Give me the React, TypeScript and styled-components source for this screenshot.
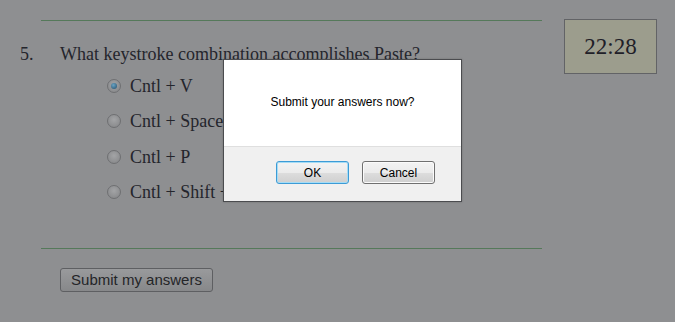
import styled, { createGlobalStyle } from 'styled-components';

const GlobalStyle = createGlobalStyle`
  html, body {
    margin: 0;
    padding: 0;
    background: #8e8f91;
  }
  body {
    width: 675px;
    height: 322px;
    overflow: hidden;
    position: relative;
  }
`;

const Page = styled.div`
  display: flex;
  align-items: flex-start;
  padding-top: 19px;
`;

const Quiz = styled.div`
  width: 542px;
`;

const Rule = styled.hr`
  margin: 0 0 0 41px;
  border: none;
  border-top: 1px solid #55795a;
  height: 0;
  width: 501px;
`;

const TopRule = styled(Rule)`
  margin-top: 1px;
`;

const Question = styled.div`
  display: flex;
  padding: 22px 0 0 20px;
  font-family: 'Liberation Serif', 'Times New Roman', serif;
  font-size: 18px;
  line-height: 22px;
  color: #24252c;
`;

const Num = styled.span`
  width: 40px;
`;

const Options = styled.ul`
  list-style: none;
  margin: 0;
  padding: 10px 0 0 107px;
  display: flex;
  flex-direction: column;
  gap: 13.3px;
  font-family: 'Liberation Serif', 'Times New Roman', serif;
  font-size: 18px;
  line-height: 22px;
  color: #24252c;
`;

const Option = styled.li`
  display: flex;
  align-items: center;
  gap: 9px;
`;

const Radio = styled.span<{ $checked?: boolean }>`
  width: 12px;
  height: 12px;
  border-radius: 50%;
  border: 1px solid #6e6f72;
  background: radial-gradient(circle at 50% 40%, #a3a4a6, #838486);
  display: flex;
  align-items: center;
  justify-content: center;

  &::after {
    content: '';
    display: ${(p) => (p.$checked ? 'block' : 'none')};
    width: 6px;
    height: 6px;
    border-radius: 50%;
    background: radial-gradient(circle at 40% 35%, #6aa4c4, #244d6a);
  }
`;

const Footer = styled.div`
  padding-top: 45px;
`;

const SubmitRow = styled.div`
  padding: 19px 0 0 60px;
`;

const SubmitButton = styled.button`
  width: 153px;
  height: 24px;
  padding: 0;
  font-family: 'Liberation Sans', Arial, sans-serif;
  font-size: 15px;
  color: #242528;
  border: 1px solid #5e5f62;
  border-radius: 3px;
  background: linear-gradient(#999a9c, #87888a);
`;

const Timer = styled.div`
  margin-left: 22px;
  width: 91px;
  height: 53px;
  border: 1px solid #626366;
  background: #9c9d8d;
  display: flex;
  align-items: center;
  justify-content: center;
  font-family: 'Liberation Serif', 'Times New Roman', serif;
  font-size: 23px;
  color: #1f2028;
`;

const Dialog = styled.div`
  position: absolute;
  left: 223px;
  top: 59px;
  width: 237px;
  height: 141px;
  border: 1px solid #4b4c4f;
  background: #fff;
  display: flex;
  flex-direction: column;
  font-family: 'Liberation Sans', Arial, sans-serif;
  font-size: 12px;
  color: #000;
  box-shadow: 0 0 2px rgba(0, 0, 0, 0.2);
`;

const Message = styled.div`
  height: 86px;
  display: flex;
  align-items: center;
  justify-content: center;
  padding-bottom: 2px;
  box-sizing: border-box;
`;

const Actions = styled.div`
  flex: 1;
  background: #f0f0f0;
  border-top: 1px solid #dfdfdf;
  display: flex;
  justify-content: flex-end;
  align-items: flex-start;
  gap: 13px;
  padding: 14px 26px 0 0;
`;

const DialogButton = styled.button<{ $focused?: boolean }>`
  width: 73px;
  height: 23px;
  padding: 0;
  font-family: 'Liberation Sans', Arial, sans-serif;
  font-size: 12px;
  color: #000;
  border-radius: 3px;
  border: 1px solid ${(p) => (p.$focused ? '#3c9bd6' : '#707070')};
  box-shadow: ${(p) => (p.$focused ? 'inset 0 0 0 1px #a6dcf5' : 'inset 0 0 0 1px #fbfbfb')};
  background: linear-gradient(#f3f3f3 0%, #ebebeb 50%, #dddddd 51%, #cfcfcf 100%);
`;

const options = ['Cntl + V', 'Cntl + Space', 'Cntl + P', 'Cntl + Shift + V'];

export default function App() {
  return (
    <>
      <GlobalStyle />
      <Page>
        <Quiz>
          <TopRule />
          <Question>
            <Num>5.</Num>
            <span>What keystroke combination accomplishes Paste?</span>
          </Question>
          <Options>
            {options.map((o, i) => (
              <Option key={o}>
                <Radio $checked={i === 0} />
                {o}
              </Option>
            ))}
          </Options>
          <Footer>
            <Rule />
          </Footer>
          <SubmitRow>
            <SubmitButton>Submit my answers</SubmitButton>
          </SubmitRow>
        </Quiz>
        <Timer>22:28</Timer>
      </Page>
      <Dialog>
        <Message>Submit your answers now?</Message>
        <Actions>
          <DialogButton $focused>OK</DialogButton>
          <DialogButton>Cancel</DialogButton>
        </Actions>
      </Dialog>
    </>
  );
}
